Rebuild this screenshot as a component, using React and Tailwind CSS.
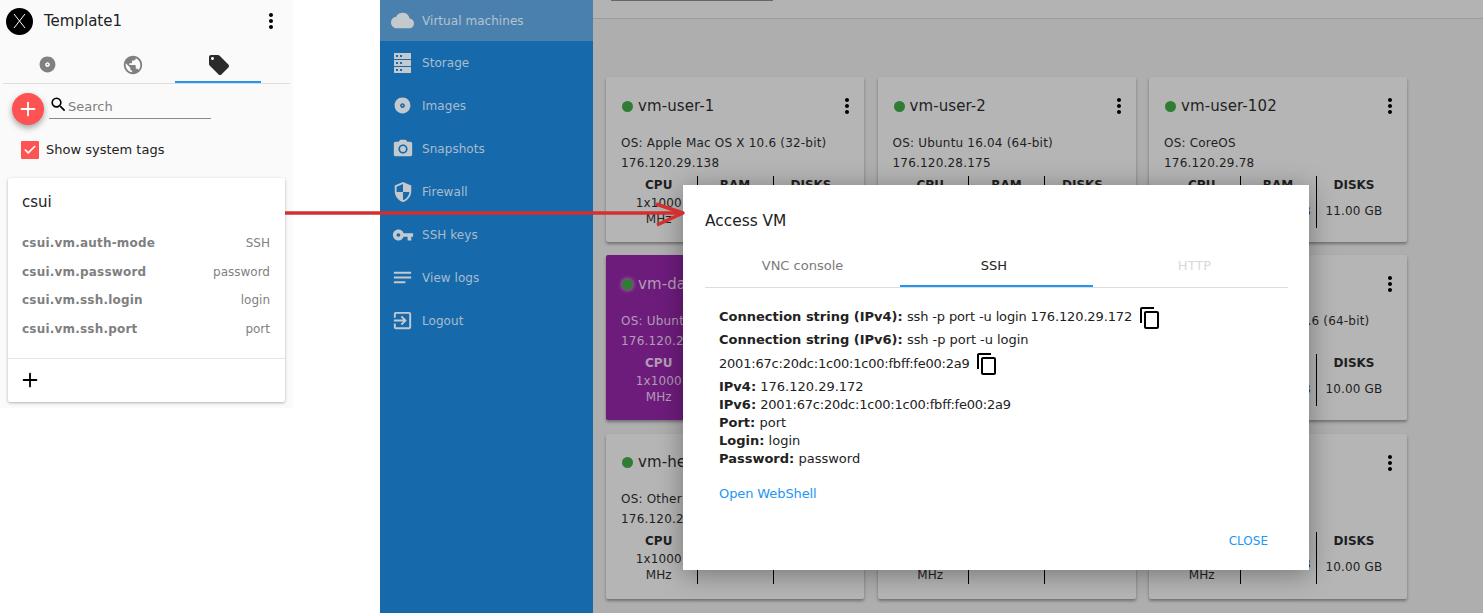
import React from 'react';
import { Plus, Check } from 'lucide-react';

const font = { fontFamily: '"DejaVu Sans", sans-serif' };

const CloudIcon = () => <svg viewBox="0 0 24 24" className="w-[23px] h-[23px] fill-current"><path d="M19.35 10.04A7.49 7.49 0 0 0 12 4C9.11 4 6.6 5.64 5.35 8.04A5.994 5.994 0 0 0 0 14c0 3.31 2.69 6 6 6h13c2.76 0 5-2.24 5-5 0-2.64-2.05-4.78-4.65-4.96z" /></svg>;
const StorageIcon = () => <svg viewBox="0 0 17 20" className="w-[17px] h-[20px] fill-current"><path fillRule="evenodd" d="M0 0h17v6H0zM2 2v2h2V2zM6 2v2h2V2zM0 7h17v6H0zM2 9v2h2V9zM6 9v2h2V9zM0 14h17v6H0zM2 16v2h2v-2zM6 16v2h2v-2z" /></svg>;
const DiscIcon = ({ cls = 'w-[19px] h-[19px]' }) => <svg viewBox="0 0 24 24" className={`${cls} fill-current`}><path d="M12 2C6.48 2 2 6.48 2 12s4.48 10 10 10 10-4.48 10-10S17.52 2 12 2zm0 13c-1.66 0-3-1.34-3-3s1.34-3 3-3 3 1.34 3 3-1.34 3-3 3z" /><circle cx="12" cy="12" r="1" /></svg>;
const CameraIcon = () => <svg viewBox="0 0 24 24" className="w-[22px] h-[22px] fill-current"><path d="M9 2 7.17 4H4c-1.1 0-2 .9-2 2v12c0 1.1.9 2 2 2h16c1.1 0 2-.9 2-2V6c0-1.1-.9-2-2-2h-3.17L15 2H9zm3 15c-2.76 0-5-2.24-5-5s2.24-5 5-5 5 2.24 5 5-2.24 5-5 5zm0-8.2a3.2 3.2 0 1 0 0 6.4 3.2 3.2 0 0 0 0-6.4z" /></svg>;
const ShieldIcon = () => <svg viewBox="0 0 24 24" className="w-[22px] h-[22px] fill-current"><path d="M12 1 3 5v6c0 5.55 3.84 10.74 9 12 5.16-1.26 9-6.45 9-12V5l-9-4zm0 10.99h7c-.53 4.12-3.28 7.79-7 8.94V12H5V6.3l7-3.11v8.8z" /></svg>;
const KeyIcon = () => <svg viewBox="0 0 24 24" className="w-[22px] h-[22px] fill-current"><path d="M12.65 10A5.99 5.99 0 0 0 7 6c-3.31 0-6 2.69-6 6s2.69 6 6 6a5.99 5.99 0 0 0 5.65-4H17v4h4v-4h2v-4H12.65zM7 14c-1.1 0-2-.9-2-2s.9-2 2-2 2 .9 2 2-.9 2-2 2z" /></svg>;
const LogsIcon = () => <svg viewBox="0 0 24 24" className="w-[23px] h-[23px] fill-current"><path d="M3 18h12v-2H3v2zM3 6v2h18V6H3zm0 7h18v-2H3v2z" /></svg>;
const LogoutIcon = () => <svg viewBox="0 0 24 24" className="w-[23px] h-[23px] fill-current"><path d="M10.09 15.59 11.5 17l5-5-5-5-1.41 1.41L12.67 11H3v2h9.67l-2.58 2.59zM19 3H5a2 2 0 0 0-2 2v4h2V5h14v14H5v-4H3v4a2 2 0 0 0 2 2h14c1.1 0 2-.9 2-2V5c0-1.1-.9-2-2-2z" /></svg>;
const GlobeIcon = () => <svg viewBox="0 0 24 24" className="w-[22px] h-[22px] fill-current"><path d="M12 2C6.48 2 2 6.48 2 12s4.48 10 10 10 10-4.48 10-10S17.52 2 12 2zm-1 17.93c-3.95-.49-7-3.85-7-7.93 0-.62.08-1.21.21-1.79L9 15v1c0 1.1.9 2 2 2v1.93zm6.9-2.54c-.26-.81-1-1.39-1.9-1.39h-1v-3c0-.55-.45-1-1-1H8v-2h2c.55 0 1-.45 1-1V7h2c1.1 0 2-.9 2-2v-.41c2.93 1.19 5 4.06 5 7.41 0 2.08-.8 3.97-2.1 5.39z" /></svg>;
const TagIcon = () => <svg viewBox="0 0 24 24" className="w-[24px] h-[24px] fill-current"><path d="M21.41 11.58 12.41 2.58C12.05 2.22 11.55 2 11 2H4c-1.1 0-2 .9-2 2v7c0 .55.22 1.05.59 1.42l9 9c.36.36.86.58 1.41.58.55 0 1.05-.22 1.41-.59l7-7c.37-.36.59-.86.59-1.41 0-.55-.23-1.06-.59-1.42zM5.5 7C4.67 7 4 6.33 4 5.5S4.67 4 5.5 4 7 4.67 7 5.5 6.33 7 5.5 7z" /></svg>;
const CopyIcon = () => <svg viewBox="0 0 24 24" className="w-[24px] h-[24px] fill-black"><path d="M16 1H4c-1.1 0-2 .9-2 2v14h2V3h12V1zm3 4H8c-1.1 0-2 .9-2 2v14c0 1.1.9 2 2 2h11c1.1 0 2-.9 2-2V7c0-1.1-.9-2-2-2zm0 16H8V7h11v14z" /></svg>;
const SearchIcon = () => <svg viewBox="0 0 24 24" className="w-[19px] h-[19px] fill-black mb-[4px] shrink-0"><path d="M15.5 14h-.79l-.28-.27A6.47 6.47 0 0 0 16 9.5 6.5 6.5 0 1 0 9.5 16c1.61 0 3.09-.59 4.23-1.57l.27.28v.79l5 4.99L20.49 19l-4.99-5zm-6 0C7.01 14 5 11.99 5 9.5S7.01 5 9.5 5 14 7.01 14 9.5 11.99 14 9.5 14z" /></svg>;
const Kebab = () => <svg viewBox="0 0 24 24" className="w-[24px] h-[24px] fill-black shrink-0"><path d="M12 8c1.1 0 2-.9 2-2s-.9-2-2-2-2 .9-2 2 .9 2 2 2zm0 2c-1.1 0-2 .9-2 2s.9 2 2 2 2-.9 2-2-.9-2-2-2zm0 6c-1.1 0-2 .9-2 2s.9 2 2 2 2-.9 2-2-.9-2-2-2z" /></svg>;

const navItems = [
  { label: 'Virtual machines', icon: <CloudIcon />, active: true },
  { label: 'Storage', icon: <StorageIcon /> },
  { label: 'Images', icon: <DiscIcon /> },
  { label: 'Snapshots', icon: <CameraIcon /> },
  { label: 'Firewall', icon: <ShieldIcon /> },
  { label: 'SSH keys', icon: <KeyIcon /> },
  { label: 'View logs', icon: <LogsIcon /> },
  { label: 'Logout', icon: <LogoutIcon /> },
];

const tags = [
  ['csui.vm.auth-mode', 'SSH'],
  ['csui.vm.password', 'password'],
  ['csui.vm.ssh.login', 'login'],
  ['csui.vm.ssh.port', 'port'],
];

const vms = [
  { name: 'vm-user-1', os: 'OS: Apple Mac OS X 10.6 (32-bit)', ip: '176.120.29.138', disks: '10.00 GB' },
  { name: 'vm-user-2', os: 'OS: Ubuntu 16.04 (64-bit)', ip: '176.120.28.175', disks: '10.00 GB' },
  { name: 'vm-user-102', os: 'OS: CoreOS', ip: '176.120.29.78', disks: '11.00 GB' },
  { name: 'vm-database', os: 'OS: Ubuntu 16.04 (64-bit)', ip: '176.120.29.20', disks: '10.00 GB', purple: true },
  { name: 'vm-user-5', os: 'OS: Ubuntu 16.04 (64-bit)', ip: '176.120.29.90', disks: '10.00 GB' },
  { name: 'vm-user-6', os: 'OS: Apple Mac OS X 10.6 (64-bit)', ip: '176.120.29.91', disks: '10.00 GB' },
  { name: 'vm-helper', os: 'OS: Other Linux', ip: '176.120.29.44', disks: '10.00 GB', lastRow: true, covered: true },
  { name: 'vm-user-8', os: 'OS: Other Linux', ip: '176.120.29.45', disks: '10.00 GB', lastRow: true, covered: true },
  { name: 'vm-user-9', os: 'OS: Other Linux', ip: '176.120.29.46', disks: '10.00 GB', lastRow: true },
];

const VmCard = ({ vm }) => (
  <div className={`h-[165px] rounded-[2px] pl-[15px] pr-[5px] pt-[15px] shadow-[0_2px_3px_rgba(0,0,0,0.35)] ${vm.purple ? 'bg-[#6e1c7c] text-[#b29cb6]' : 'bg-[#b5b5b5] text-[#1f1f1f]'}`}>
    <div className="flex items-center h-[28px]">
      <span className={`w-[11px] h-[11px] ml-[1px] rounded-full bg-[#2f7d32] mr-[5px] ${vm.purple ? 'shadow-[0_0_4px_rgba(255,255,255,0.5)]' : ''}`} />
      <span className="text-[15px] tracking-[0.1px] flex-1 whitespace-nowrap">{vm.name}</span>
      <Kebab />
    </div>
    <div className={`text-[12px] tracking-[0.2px] leading-[20px] whitespace-nowrap ${vm.lastRow ? 'mt-[12px]' : 'mt-[13px]'}`}>
      <div>{vm.os}</div>
      <div>{vm.ip}</div>
    </div>
    <div className="flex text-[12px] tracking-[0.15px] text-center mt-[3px]">
      <div className="w-[75.5px]">
        <div className="font-bold tracking-normal leading-[17px] pt-[1px]">CPU</div>
        <div className="leading-[16px] mt-[1px]">1x1000<br />MHz</div>
      </div>
      <div className="w-[76px] border-l border-black h-[52px] whitespace-nowrap">
        <div className="font-bold tracking-normal leading-[17px] pt-[1px]">RAM</div>
        <div className={`leading-[16px] ${vm.lastRow ? 'mt-[6px]' : 'mt-[9px]'}`}>512.00 MB</div>
      </div>
      <div className="w-[76px] border-l border-black h-[52px] whitespace-nowrap">
        <div className="font-bold tracking-normal leading-[17px] pt-[1px]">DISKS</div>
        <div className={`leading-[16px] ${vm.covered ? 'mt-[6px]' : 'mt-[9px]'}`}>{vm.disks}</div>
      </div>
    </div>
  </div>
);

const Kv = ({ k, children }) => (
  <div className="leading-[18px] whitespace-nowrap"><b>{k}</b> {children}</div>
);

export default function App() {
  return (
    <div className="relative flex w-[1483px] h-[614px] overflow-hidden bg-white text-[13px]" style={font}>
      {/* left crop: tags panel */}
      <div className="w-[380px] shrink-0">
        <div className="w-[293px] h-[408px] bg-[#fafafa]">
          <div className="flex items-center h-[42px] pl-[6px] pr-[10px]">
            <div className="w-[27px] h-[27px] rounded-full bg-black shrink-0">
              <svg viewBox="0 0 27 27" className="w-[27px] h-[27px] stroke-white" strokeWidth="1"><path d="M8 6 19 20M19 6 8 20" /></svg>
            </div>
            <span className="ml-[11px] text-[15px] text-[#222] flex-1">Template1</span>
            <Kebab />
          </div>
          <div className="flex h-[42px] mx-[3px] border-b border-[#ddd]">
            <div className="w-[86px] pl-[2px] pt-[4px] flex items-center justify-center text-[#808080]"><DiscIcon /></div>
            <div className="w-[86px] pl-[2px] pt-[4px] flex items-center justify-center text-[#808080]"><GlobeIcon /></div>
            <div className="w-[86px] pl-[2px] pt-[6px] flex items-center justify-center text-[#2b2b2b] border-b-2 border-[#2196f3] h-[41px]"><TagIcon /></div>
          </div>
          <div className="flex items-start pl-[12px] pt-[9px]">
            <div className="w-[32px] h-[32px] rounded-full bg-[#ff5252] flex items-center justify-center shadow-[0_3px_6px_rgba(0,0,0,0.35)]">
              <Plus className="w-[22px] h-[22px] text-white" strokeWidth={2} />
            </div>
            <div className="ml-[5px] w-[162px] h-[26px] pt-[1px] border-b border-[#8a8a8a] flex items-center">
              <SearchIcon />
              <span className="text-[13px] text-[#808080] mt-[2px]">Search</span>
            </div>
          </div>
          <div className="flex items-center pl-[21px] mt-[16px] h-[18px]">
            <div className="w-[18px] h-[18px] rounded-[1px] bg-[#ff5252] flex items-center justify-center">
              <Check className="w-[14px] h-[14px] text-white" strokeWidth={3} />
            </div>
            <span className="ml-[7px] text-[13px] text-[#222]">Show system tags</span>
          </div>
          <div className="ml-[8px] mt-[19px] w-[277px] bg-white rounded-[2px] shadow-[0_1px_3px_rgba(0,0,0,0.3)]">
            <div className="px-[14px] pt-[14px] text-[15px] leading-[20px] text-[#222]">csui</div>
            <div className="pt-[17px] pb-[14px] pl-[14px] pr-[15px]">
              {tags.map(([k, v]) => (
                <div key={k} className="flex justify-between text-[12px] leading-[28.7px] text-[#7f7f7f]">
                  <b className="tracking-[0.2px]">{k}</b><span>{v}</span>
                </div>
              ))}
            </div>
            <div className="border-t border-[#e3e3e3] h-[44px] pl-[11px] flex items-center">
              <Plus className="w-[22px] h-[22px] text-black" strokeWidth={2} />
            </div>
          </div>
        </div>
      </div>

      {/* dimmed app */}
      <div className="w-[213px] h-[613px] shrink-0 bg-[#166aac] text-[#a9bccc]">
        {navItems.map((n) => (
          <div key={n.label} className={n.active ? 'flex items-center h-[41px] bg-[#4a80ad] text-[#b5c3cf]' : 'flex items-center h-[43px]'}>
            <div className="w-[42px] pl-[3px] flex justify-center text-[#c4c9ce]">{n.icon}</div>
            <span className="text-[12px] tracking-[0.05px]">{n.label}</span>
          </div>
        ))}
      </div>
      <div className="flex-1 h-[613px] bg-[#aeaeae]">
        <div className="h-[19px] bg-[#b3b3b3] border-b border-[#9c9c9c] pl-[18px]">
          <div className="w-[162px] h-[1px] bg-[#666]" />
        </div>
        <div className="grid grid-cols-[258px_258px_258px] gap-x-[13.5px] gap-y-[13.3px] pl-[13px] pt-[58px]">
          {vms.map((vm) => <VmCard key={vm.name} vm={vm} />)}
        </div>
      </div>

      {/* dialog */}
      <div className="absolute left-[683px] top-[185px] w-[626px] h-[385px] bg-white pl-[22px] pr-[21px] pt-[26px] shadow-[0_4px_24px_rgba(0,0,0,0.35)]">
        <div className="text-[15.4px] leading-[20px] text-[#222]">Access VM</div>
        <div className="flex mt-[13px] h-[44px] border-b border-[#ddd] text-[13px] text-center leading-[44px]">
          <div className="w-[195px] text-[#7a7a7a]">VNC console</div>
          <div className="w-[193px] pr-[5px] text-[#222] h-[43px] border-b-2 border-[#2196f3]">SSH</div>
          <div className="w-[195px] pl-[8px] text-[#dcd8d6]">HTTP</div>
        </div>
        <div className="pl-[14px] pt-[15px] text-[13px] text-[#222]">
          <div className="flex items-center h-[27px] whitespace-nowrap">
            <span><b>Connection string (IPv4):</b> <span className="tracking-[-0.14px]">ssh -p port -u login 176.120.29.172</span></span>
            <span className="ml-[6px] mt-[2px]"><CopyIcon /></span>
          </div>
          <div className="h-[20px] leading-[20px] whitespace-nowrap"><b>Connection string (IPv6):</b> <span className="tracking-[-0.05px]">ssh -p port -u login</span></div>
          <div className="flex items-center h-[28px] whitespace-nowrap">
            <span className="tracking-[-0.21px]">2001:67c:20dc:1c00:1c00:fbff:fe00:2a9</span>
            <span className="ml-[5px]"><CopyIcon /></span>
          </div>
          <Kv k="IPv4:">176.120.29.172</Kv>
          <Kv k="IPv6:"><span className="tracking-[-0.21px]">2001:67c:20dc:1c00:1c00:fbff:fe00:2a9</span></Kv>
          <Kv k="Port:">port</Kv>
          <Kv k="Login:">login</Kv>
          <Kv k="Password:">password</Kv>
          <div className="mt-[16px] text-[#2196f3] tracking-[-0.1px]">Open WebShell</div>
        </div>
        <div className="absolute right-[41px] bottom-[20px] text-[12px] text-[#2196f3]">CLOSE</div>
      </div>

      {/* annotation arrow */}
      <svg className="absolute left-[285px] top-[200px] w-[405px] h-[30px] pointer-events-none" viewBox="0 0 405 30">
        <path d="M0 13H396" stroke="#d32f2f" strokeWidth="3.5" />
        <path d="M371 4 398 13 372 25" fill="none" stroke="#d32f2f" strokeWidth="3.5" strokeLinejoin="round" />
      </svg>
    </div>
  );
}
